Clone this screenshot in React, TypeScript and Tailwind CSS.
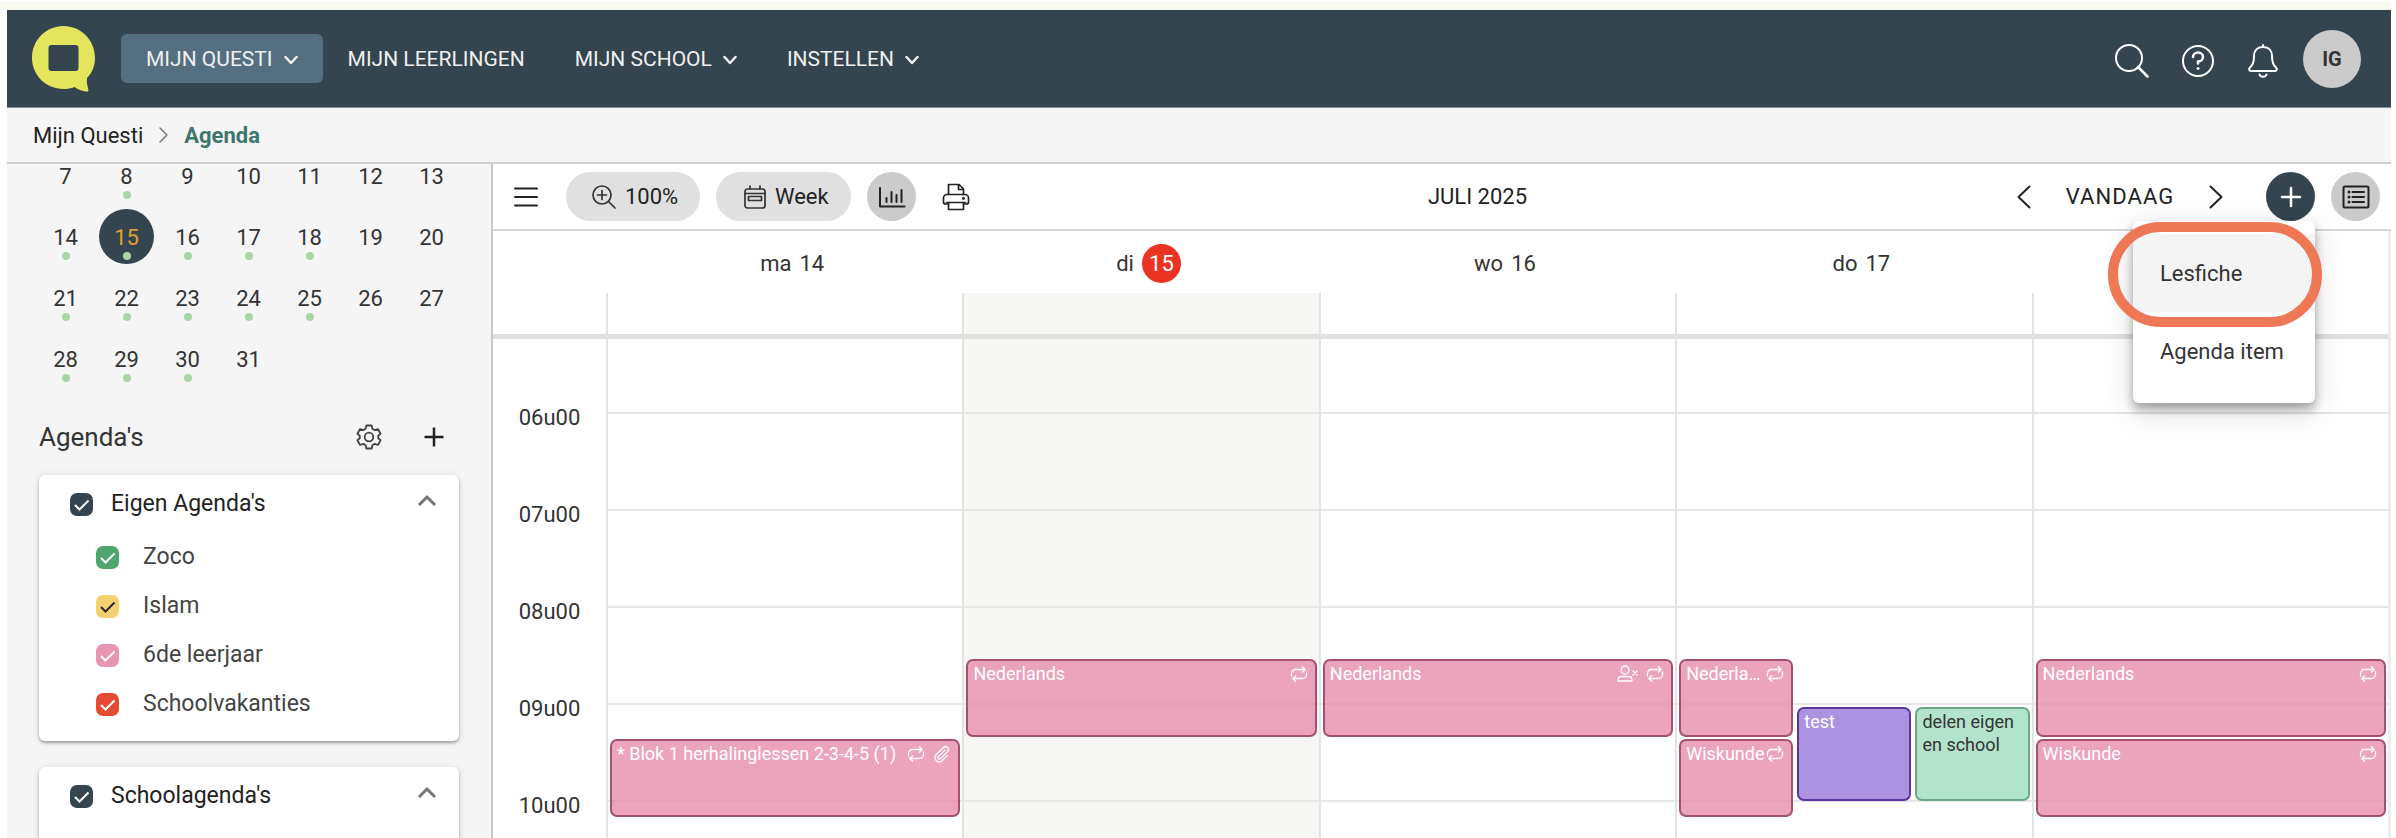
import type { ReactNode } from 'react';
import { clsx } from 'clsx';

type IconProps = { className?: string };

type CalendarEvent = {
  title: string;
  start: number;
  end: number;
  color: 'pink' | 'purple' | 'green';
  lane?: number;
  lanes?: number;
  wrap?: boolean;
  icons?: ('absent' | 'repeat' | 'attachment')[];
};

type Day = { label?: string; date: number; today?: boolean; events: CalendarEvent[] };

const HOUR_HEIGHT = 97;
const FIRST_HOUR = 6;
const GRID_OFFSET = 73;

const at = (h: number, m = 0) => h * 60 + m;

const HOURS = ['06u00', '07u00', '08u00', '09u00', '10u00'];

const DAYS: Day[] = [
  {
    label: 'ma',
    date: 14,
    events: [
      {
        title: '* Blok 1 herhalinglessen 2-3-4-5 (1)',
        start: at(9, 20),
        end: at(10, 10),
        color: 'pink',
        icons: ['repeat', 'attachment'],
      },
    ],
  },
  {
    label: 'di',
    date: 15,
    today: true,
    events: [{ title: 'Nederlands', start: at(8, 30), end: at(9, 20), color: 'pink', icons: ['repeat'] }],
  },
  {
    label: 'wo',
    date: 16,
    events: [
      { title: 'Nederlands', start: at(8, 30), end: at(9, 20), color: 'pink', icons: ['absent', 'repeat'] },
    ],
  },
  {
    label: 'do',
    date: 17,
    events: [
      { title: 'Nederlands', start: at(8, 30), end: at(9, 20), color: 'pink', lanes: 3, icons: ['repeat'] },
      { title: 'Wiskunde', start: at(9, 20), end: at(10, 10), color: 'pink', lanes: 3, icons: ['repeat'] },
      { title: 'test', start: at(9), end: at(10), color: 'purple', lane: 1, lanes: 3 },
      { title: 'delen eigen en school', start: at(9), end: at(10), color: 'green', lane: 2, lanes: 3, wrap: true },
    ],
  },
  {
    // the open menu covers this heading
    date: 18,
    events: [
      { title: 'Nederlands', start: at(8, 30), end: at(9, 20), color: 'pink', icons: ['repeat'] },
      { title: 'Wiskunde', start: at(9, 20), end: at(10, 10), color: 'pink', icons: ['repeat'] },
    ],
  },
];

const MONTH_DAYS = Array.from({ length: 25 }, (_, i) => i + 7);
const BUSY_DAYS = [8, 14, 15, 16, 17, 18, 21, 22, 23, 24, 25, 28, 29, 30];

const AGENDAS = [
  { name: 'Zoco', box: 'bg-[#4fa56c]', check: 'text-white' },
  { name: 'Islam', box: 'bg-[#f3d071]', check: 'text-[#2b2b2b]' },
  { name: '6de leerjaar', box: 'bg-[#e895b2]', check: 'text-white' },
  { name: 'Schoolvakanties', box: 'bg-[#e54b33]', check: 'text-white' },
];

const EVENT_COLORS = {
  pink: 'border-[#a5506e] bg-[#e78dac]/80 text-white',
  purple: 'border-[#5b359c] bg-[#a88de0]/95 text-white',
  green: 'border-[#6ba888] bg-[#aee2c9]/95 text-[#333]',
};

function Svg({ size, className, children }: { size: string; className?: string; children: ReactNode }) {
  return (
    <svg
      viewBox={size}
      className={clsx('shrink-0', className)}
      fill="none"
      stroke="currentColor"
      strokeWidth="2"
      strokeLinecap="round"
      strokeLinejoin="round"
      aria-hidden
    >
      {children}
    </svg>
  );
}

function Logo() {
  return (
    <svg viewBox="0 0 63 66" className="h-[66px] w-[63px]" aria-hidden>
      <path
        d="M31.500 0C49 0 63 14 63 32C63 40 60 47 55 52C54.500 57 55.500 60 56.500 64C56.500 65.300 55.500 66 54 65.500C50 65 46 63.500 42.500 61C39 62.500 35.500 63 31.500 63C14 63 0 49 0 32C0 14 14 0 31.500 0Z"
        fill="#e3e55c"
      />
      <rect x="16.500" y="19" width="30" height="26" rx="3" fill="#34454f" />
    </svg>
  );
}

function NavChevron() {
  return (
    <Svg size="0 0 14 10" className="h-[10px] w-[14px]">
      <path d="M1.500 2L7 8L12.500 2" strokeWidth="2.500" />
    </Svg>
  );
}

function RepeatIcon({ className }: IconProps) {
  return (
    <Svg size="0 0 18 16" className={clsx('h-4 w-[18px]', className)}>
      <g strokeWidth="1.300">
        <path d="M1.500 10V7.500A4 4 0 0 1 5.500 3.500H15M12.300 0.800L15.200 3.500L12.300 6.200" />
        <path d="M16.500 6V8.500A4 4 0 0 1 12.500 12.500H3M5.700 9.800L2.800 12.500L5.700 15.200" />
      </g>
    </Svg>
  );
}

function AttachmentIcon() {
  return (
    <Svg size="0 0 18 18" className="h-[18px] w-[18px]">
      <path
        d="M12 5L5.300 11.700A1.500 1.500 0 0 0 7.400 13.800L14.800 6.400A3 3 0 0 0 10.600 2.200L3 9.800A4.300 4.300 0 0 0 9 15.900L14.500 10.400"
        strokeWidth="1.300"
      />
    </Svg>
  );
}

function AbsentIcon() {
  return (
    <Svg size="0 0 21 17" className="h-[17px] w-[21px]">
      <g strokeWidth="1.300">
        <circle cx="8" cy="5" r="4" />
        <path d="M1 16V14.500A3.500 3.500 0 0 1 4.500 11.500H11.500A3.500 3.500 0 0 1 15 14.500V16Z" />
        <path d="M16 6L20 10M20 6L16 10" />
      </g>
    </Svg>
  );
}

function NavItem({ children, active, menu }: { children: ReactNode; active?: boolean; menu?: boolean }) {
  return (
    <button
      type="button"
      className={clsx(
        'flex h-[49px] items-center gap-[11px] rounded-md px-[25px] pt-[3px] text-[21px] whitespace-nowrap text-[#f0f0f0]',
        active && 'bg-[#546f80]',
      )}
    >
      {children}
      {menu && <NavChevron />}
    </button>
  );
}

function Header() {
  return (
    <header className="flex h-[98px] shrink-0 items-center border-b border-[#7d8f9b] bg-[#34454f] pr-[30px] pl-[25px] text-white">
      <a href="#" aria-label="Questi" className="mr-[26px]">
        <Logo />
      </a>
      <nav className="flex flex-1 items-center">
        <NavItem active menu>
          MIJN QUESTI
        </NavItem>
        <NavItem>MIJN LEERLINGEN</NavItem>
        <NavItem menu>MIJN SCHOOL</NavItem>
        <NavItem menu>INSTELLEN</NavItem>
      </nav>
      <div className="flex items-center gap-8">
        <button type="button" aria-label="Zoeken" className="pt-1">
          <Svg size="0 0 34 34" className="h-[34px] w-[34px]">
            <circle cx="14" cy="14" r="13" />
            <path d="M23 23L32.500 32.500" strokeWidth="2.500" />
          </Svg>
        </button>
        <button type="button" aria-label="Help" className="pt-1">
          <Svg size="0 0 34 34" className="h-[34px] w-[34px]">
            <circle cx="17" cy="17" r="15" />
            <path d="M12 13A5 4.500 0 1 1 17 17.500V19.500" strokeWidth="2.500" />
            <circle cx="17" cy="24.500" r="1" fill="currentColor" strokeWidth="1" />
          </Svg>
        </button>
        <button type="button" aria-label="Meldingen" className="pt-1">
          <Svg size="0 0 32 34" className="h-[34px] w-8">
            <path d="M16 1V3M16 3C10 3 7 7 7 12C7 19 5.500 21 3 23.500C1.500 25 2 27 4 27H28C30 27 30.500 25 29 23.500C26.500 21 25 19 25 12C25 7 22 3 16 3Z" />
            <path d="M12.500 30.500C13.500 33.500 18.500 33.500 19.500 30.500" />
          </Svg>
        </button>
        <button
          type="button"
          className="-ml-2 flex h-[58px] w-[58px] items-center justify-center rounded-full bg-[#cbcbcb] text-[20px] font-bold text-[#333]"
        >
          IG
        </button>
      </div>
    </header>
  );
}

function Breadcrumbs() {
  return (
    <nav
      aria-label="Kruimelpad"
      className="flex h-14 shrink-0 items-center gap-4 border-b-2 border-[#cfcfcf] bg-[#f5f5f5] px-[26px] text-[22px] text-[#222]"
    >
      <a href="#">Mijn Questi</a>
      <Svg size="0 0 9 16" className="h-4 w-[9px] text-[#777]">
        <path d="M1 1L8 8L1 15" strokeWidth="1.500" />
      </Svg>
      <a href="#" aria-current="page" className="font-bold text-[#40756c]">
        Agenda
      </a>
    </nav>
  );
}

function MonthCalendar() {
  return (
    <div className="-mt-[19px] grid grid-cols-[repeat(7,61px)] pl-7">
      {MONTH_DAYS.map((day) => (
        <button key={day} type="button" className="flex h-[61px] items-center justify-center">
          <span
            className={clsx(
              'flex h-[55px] w-[55px] flex-col items-center rounded-full pt-[15px] text-[22px] leading-7',
              day === 15 ? 'bg-[#34454f] text-[#e0a030]' : 'text-[#333]',
            )}
          >
            {day}
            {BUSY_DAYS.includes(day) && <span className="h-2 w-2 rounded-full bg-[#a9d5a7]" />}
          </span>
        </button>
      ))}
    </div>
  );
}

function Checkbox({ id, box, check }: { id: string; box: string; check: string }) {
  return (
    <span className="relative h-[23px] w-[23px] shrink-0">
      <input
        id={id}
        type="checkbox"
        defaultChecked
        className={clsx('peer block h-[23px] w-[23px] appearance-none rounded-[7px]', box)}
      />
      <Svg
        size="0 0 23 23"
        className={clsx('pointer-events-none absolute inset-0 h-[23px] w-[23px] opacity-0 peer-checked:opacity-100', check)}
      >
        <path d="M5 12L9.500 16.500L18.500 7.500" strokeLinecap="butt" strokeLinejoin="miter" />
      </Svg>
    </span>
  );
}

function AgendaCard({ title, id, agendas = [] }: { title: string; id: string; agendas?: typeof AGENDAS }) {
  return (
    <section className="rounded-md bg-white pt-[9px] pb-3 shadow-[0_2px_3px_rgba(0,0,0,0.3),0_1px_8px_rgba(0,0,0,0.1)]">
      <div className="flex h-10 items-center pr-[22px] pl-[31px]">
        <Checkbox id={id} box="bg-[#34454f]" check="text-white" />
        <label htmlFor={id} className="flex-1 pl-[18px] text-[23px] text-[#222]">
          {title}
        </label>
        <button type="button" aria-label={`${title} inklappen`} className="pb-2">
          <Svg size="0 0 20 14" className="h-[14px] w-5 text-[#757575]">
            <path d="M2 12L10 4L18 12" strokeWidth="3" strokeLinecap="butt" strokeLinejoin="miter" />
          </Svg>
        </button>
      </div>
      <ul className="min-h-12 pt-[9px] pl-[57px]">
        {agendas.map((a) => (
          <li key={a.name} className="flex h-[49px] items-center">
            <Checkbox id={`${id}-${a.name}`} box={a.box} check={a.check} />
            <label htmlFor={`${id}-${a.name}`} className="pl-6 text-[23px] text-[#444]">
              {a.name}
            </label>
          </li>
        ))}
      </ul>
    </section>
  );
}

function Sidebar() {
  return (
    <aside className="w-[486px] shrink-0 overflow-hidden border-r-2 border-[#c8c8c8] bg-[#f5f5f5]">
      <MonthCalendar />
      <div className="flex h-[86px] items-center pt-[10px] pr-[46px] pl-8">
        <h2 className="flex-1 text-[26px] text-[#333]">Agenda's</h2>
        <button type="button" aria-label="Instellingen" className="mr-[41px]">
          <Svg size="0 0 26 26" className="h-[26px] w-[26px] text-[#444]">
            <path
              d="M10.300 1.500H15.700L16.300 4.700L18.800 6.100L21.900 5L24.600 9.700L22.200 11.700V14.300L24.600 16.300L21.900 21L18.800 19.900L16.300 21.300L15.700 24.500H10.300L9.700 21.300L7.200 19.900L4.100 21L1.400 16.300L3.800 14.300V11.700L1.400 9.700L4.100 5L7.200 6.100L9.700 4.700Z"
              strokeWidth="1.800"
            />
            <circle cx="13" cy="13" r="4.300" strokeWidth="1.800" />
          </Svg>
        </button>
        <button type="button" aria-label="Agenda toevoegen">
          <Svg size="0 0 22 22" className="h-[22px] w-[22px] text-[#222]">
            <path d="M11 1.500V20.500M1.500 11H20.500" strokeWidth="2.500" strokeLinecap="butt" />
          </Svg>
        </button>
      </div>
      <div className="flex flex-col gap-[26px] px-8">
        <AgendaCard id="eigen" title="Eigen Agenda's" agendas={AGENDAS} />
        <AgendaCard id="school" title="Schoolagenda's" />
      </div>
    </aside>
  );
}

function AddMenu() {
  return (
    <div className="relative">
      <button
        type="button"
        aria-label="Toevoegen"
        aria-expanded
        className="flex h-[49px] w-[49px] items-center justify-center rounded-full bg-[#34454f] text-white"
      >
        <Svg size="0 0 22 22" className="h-[22px] w-[22px]">
          <path d="M11 2V20M2 11H20" strokeWidth="2.500" />
        </Svg>
      </button>
      <div
        role="menu"
        className="absolute top-full right-0 z-10 w-[182px] rounded-md bg-white py-[13px] text-[22px] text-[#333] shadow-[0_6px_10px_rgba(0,0,0,0.3),0_8px_30px_rgba(0,0,0,0.16)]"
      >
        <button type="button" role="menuitem" className="flex h-[78px] w-full items-center bg-[#f4f4f4] px-[27px] whitespace-nowrap">
          Lesfiche
        </button>
        <button type="button" role="menuitem" className="flex h-[78px] w-full items-center px-[27px] whitespace-nowrap">
          Agenda item
        </button>
        <span className="pointer-events-none absolute top-[1px] -right-[7px] -left-[25px] h-[105px] rounded-full border-10 border-[#ee7755]" />
      </div>
    </div>
  );
}

function Toolbar() {
  return (
    <div className="flex h-[67px] shrink-0 items-center border-b-2 border-[#d8d8d8] pr-[11px] pl-[21px] text-[22px] text-[#222]">
      <button type="button" aria-label="Menu" className="mr-7">
        <Svg size="0 0 24 20" className="h-5 w-6">
          <path d="M1 1.500H23M1 10H23M1 18.500H23" />
        </Svg>
      </button>
      <button type="button" className="mr-4 flex h-[49px] w-[134px] items-center gap-[9px] rounded-full bg-[#e0e0e0] pl-[26px]">
        <Svg size="0 0 24 24" className="h-6 w-6 text-[#333]">
          <g strokeWidth="1.700">
            <circle cx="10" cy="10" r="9" />
            <path d="M16.500 16.500L23 23M10 5.500V14.500M5.500 10H14.500" />
          </g>
        </Svg>
        100%
      </button>
      <button type="button" className="mr-4 flex h-[49px] w-[135px] items-center gap-[9px] rounded-full bg-[#e0e0e0] pl-7">
        <Svg size="0 0 22 24" className="h-6 w-[22px] text-[#333]">
          <g strokeWidth="1.700">
            <rect x="1" y="4" width="20" height="19" rx="2.500" />
            <path d="M6 1V4M16 1V4M1 8.500H21" />
            <rect x="4.500" y="11.500" width="13" height="4" />
          </g>
        </Svg>
        Week
      </button>
      <button
        type="button"
        aria-label="Statistieken"
        className="mr-[26px] flex h-[49px] w-[49px] items-center justify-center rounded-full bg-[#cbcbcb]"
      >
        <Svg size="0 0 28 22" className="h-[22px] w-7">
          <path d="M2 2V20.500H26.500M8.500 12V16M13.500 6V16M18.500 9V16M23.500 4V16" />
        </Svg>
      </button>
      <button type="button" aria-label="Afdrukken">
        <Svg size="0 0 28 28" className="h-7 w-7">
          <g strokeWidth="1.700">
            <path d="M6.500 11.500V1.500H17L21.500 6V11.500M16.500 1.500V6.500H21.500" />
            <path d="M6.500 21H3.500A2 2 0 0 1 1.500 19V15A3.500 3.500 0 0 1 5 11.500H23A3.500 3.500 0 0 1 26.500 15V19A2 2 0 0 1 24.500 21H21.500" />
            <path d="M4.500 19.500H23.500M6.500 20V26.500H21.500V20" />
            <circle cx="21.500" cy="15.500" r="0.600" fill="currentColor" />
          </g>
        </Svg>
      </button>
      <h1 className="flex-1 pr-8 text-center">JULI 2025</h1>
      <button type="button" aria-label="Vorige week">
        <Svg size="0 0 14 24" className="h-6 w-[14px]">
          <path d="M12.500 1.500L1.500 12L12.500 22.500" />
        </Svg>
      </button>
      <button type="button" className="w-[178px] tracking-wider">
        VANDAAG
      </button>
      <button type="button" aria-label="Volgende week" className="mr-[43px]">
        <Svg size="0 0 14 24" className="h-6 w-[14px]">
          <path d="M1.500 1.500L12.500 12L1.500 22.500" />
        </Svg>
      </button>
      <AddMenu />
      <button
        type="button"
        aria-label="Lijstweergave"
        className="ml-4 flex h-[49px] w-[49px] items-center justify-center rounded-full bg-[#cbcbcb]"
      >
        <Svg size="0 0 28 24" className="h-6 w-7">
          <rect x="1.500" y="1.500" width="25" height="21" rx="1.500" />
          <path d="M10.500 7H22M10.500 12H22M10.500 17H22" />
          <path d="M7 7H7.010M7 12H7.010M7 17H7.010" strokeWidth="3" />
        </Svg>
      </button>
    </div>
  );
}

function EventBlock({ event }: { event: CalendarEvent }) {
  const { lane = 0, lanes = 1, icons = [] } = event;
  const perMinute = HOUR_HEIGHT / 60;
  return (
    <article
      className={clsx(
        'absolute flex items-start overflow-hidden rounded-[7px] border-2 pt-px pl-[5px] text-[18px] leading-[23px]',
        icons.length > 0 ? 'pr-[7px]' : 'pr-[5px]',
        EVENT_COLORS[event.color],
      )}
      style={{
        top: Math.round(GRID_OFFSET + (event.start - FIRST_HOUR * 60) * perMinute) + 4,
        height: Math.round((event.end - event.start) * perMinute) - 3,
        left: `calc(${(lane / lanes) * 100}% + 2px)`,
        width: `calc(${100 / lanes}% - 4px)`,
      }}
    >
      <h3 className={clsx('min-w-0 flex-1', !event.wrap && 'truncate')}>{event.title}</h3>
      {icons.length > 0 && (
        <span className="flex h-[23px] items-center gap-2">
          {icons.map((icon) => {
            if (icon === 'absent') return <AbsentIcon key={icon} />;
            if (icon === 'attachment') return <AttachmentIcon key={icon} />;
            return <RepeatIcon key={icon} />;
          })}
        </span>
      )}
    </article>
  );
}

function WeekView() {
  return (
    <div className="flex min-h-0 flex-1 flex-col overflow-hidden border-r-[3px] border-[#ededed] text-[22px] text-[#333]">
      <div className="grid h-[62px] shrink-0 grid-cols-[113px_repeat(5,1fr)]">
        <span />
        {DAYS.map((d) => (
          <div key={d.date} className="flex items-center justify-center gap-2 pt-[2px] pl-4">
            {d.label}
            {d.label && (
              <span
                className={clsx(
                  d.today && 'flex h-[39px] w-[39px] items-center justify-center rounded-full bg-[#ec3323] text-white',
                )}
              >
                {d.date}
              </span>
            )}
          </div>
        ))}
      </div>
      <div className="grid h-[46px] shrink-0 grid-cols-[113px_repeat(5,1fr)] border-b-5 border-[#e0e0e0]">
        <span />
        {DAYS.map((d) => (
          <div key={d.date} className={clsx('border-l-2 border-[#e3e3e3]', d.today && 'bg-[#f6f7f2]')} />
        ))}
      </div>
      <div className="grid flex-1 grid-cols-[113px_repeat(5,1fr)]">
        <div className="pt-[65px] text-center">
          {HOURS.map((h) => (
            <div key={h} className="h-[97px] leading-7">
              {h}
            </div>
          ))}
        </div>
        {DAYS.map((d) => (
          <div key={d.date} className={clsx('relative border-l-2 border-[#e3e3e3] pt-[73px]', d.today && 'bg-[#f6f7f2]')}>
            {HOURS.map((h) => (
              <div key={h} className="h-[97px] border-t-2 border-[#e6e6e6]" />
            ))}
            {d.events.map((e) => (
              <EventBlock key={`${e.title}-${e.start}`} event={e} />
            ))}
          </div>
        ))}
      </div>
    </div>
  );
}

export default function App() {
  return (
    <div className="flex h-screen flex-col overflow-hidden bg-white pt-[2px] pr-[5px] font-[Roboto,sans-serif]">
      <div className="h-2 shrink-0 bg-[#f8f9f0]" />
      <div className="flex min-h-0 flex-1 flex-col pl-[7px]">
        <Header />
        <Breadcrumbs />
        <div className="flex min-h-0 flex-1">
          <Sidebar />
          <main className="flex min-w-0 flex-1 flex-col bg-white">
            <Toolbar />
            <WeekView />
          </main>
        </div>
      </div>
    </div>
  );
}
